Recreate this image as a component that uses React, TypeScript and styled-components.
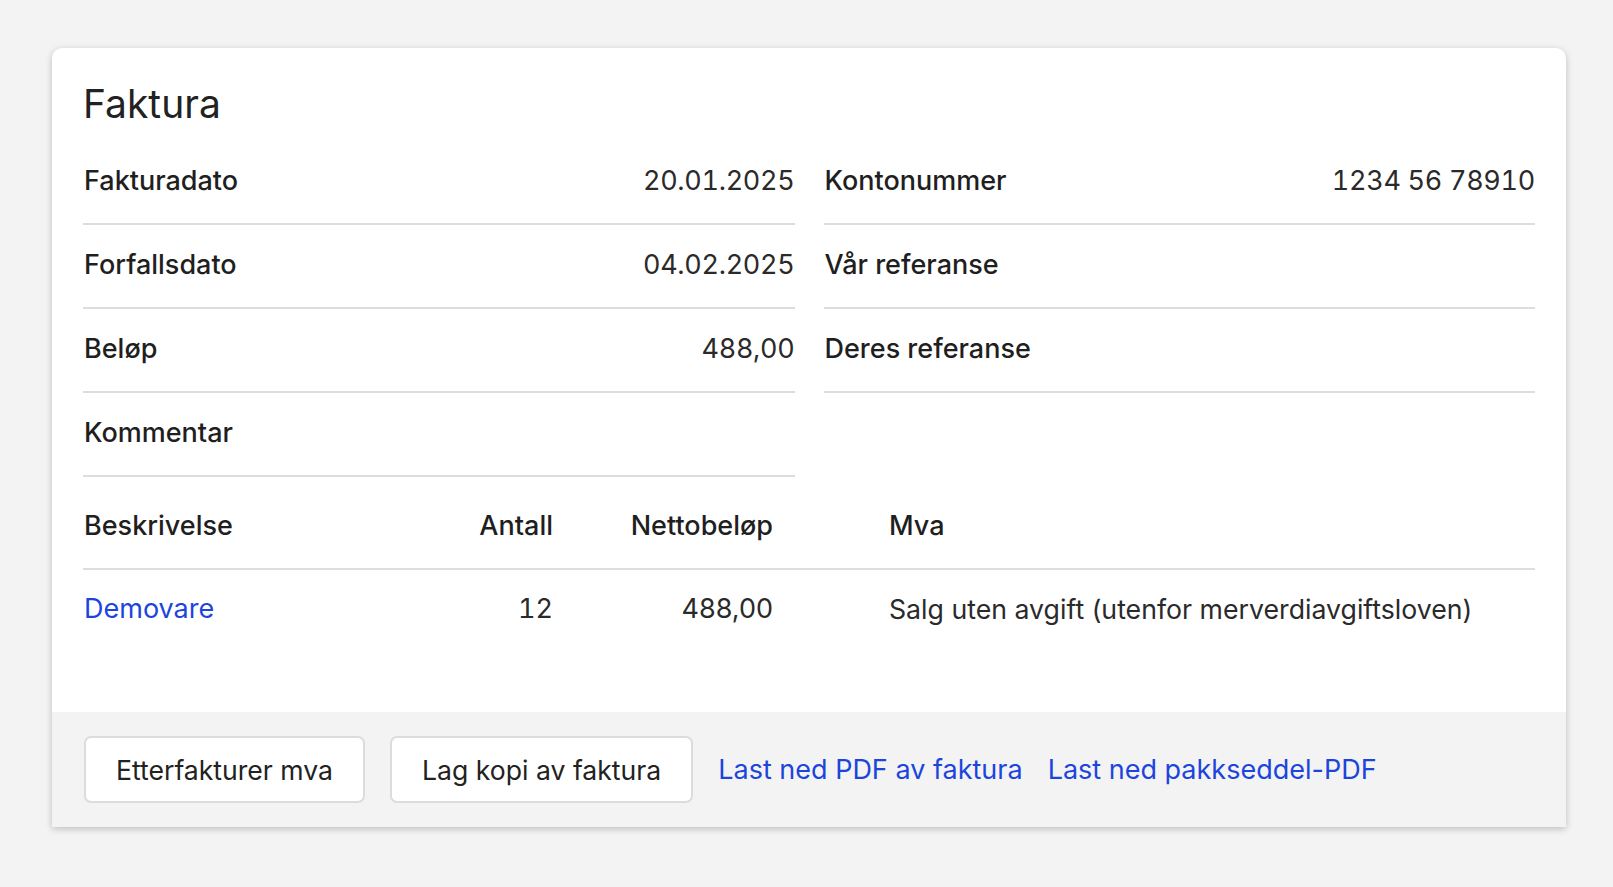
import React from "react";
import styled, { createGlobalStyle } from "styled-components";

const Global = createGlobalStyle`
  html, body { margin: 0; padding: 0; background: #f3f3f3; }
  body { font-family: Inter, "Liberation Sans", Arial, sans-serif; color: #222; }
  * { box-sizing: border-box; }
`;

const Page = styled.div`
  padding: 48px 47px 60px 52px;
`;

const Card = styled.section`
  width: 1514px;
  background: #fff;
  border-radius: 10px 10px 0 0;
  box-shadow: 0 2px 7px rgba(0, 0, 0, 0.22);
`;

const Body = styled.div`
  padding: 32px 31px 65px;
`;

const Title = styled.h1`
  margin: 0 0 13px;
  font-size: 39px;
  line-height: 48px;
  font-weight: 400;
  color: #222;
`;

const Columns = styled.div`
  display: grid;
  grid-template-columns: 1fr 1fr;
  column-gap: 29px;
  align-items: start;
`;

const List = styled.dl`
  margin: 0;
`;

const Row = styled.div`
  display: flex;
  justify-content: space-between;
  align-items: baseline;
  padding: 22px 0 24px 1px;
  border-bottom: 2px solid #dddddd;
  font-size: 27px;
  line-height: 36px;
`;

const Label = styled.dt`
  font-weight: 500;
  color: #1f1f1f;
`;

const Value = styled.dd`
  margin: 0;
  font-weight: 400;
  color: #2a2a2a;
  font-variant-numeric: tabular-nums;
  letter-spacing: -0.3px;
`;

const Table = styled.div`
  display: grid;
  grid-template-columns: 370px 100px 220px 1fr;
  font-size: 27px;
  line-height: 36px;
`;

const HeadCell = styled.div<{ $align?: "left" | "right"; $indent?: boolean }>`
  padding: 31px 0 24px ${(p) => (p.$indent ? "116px" : "1px")};
  text-align: ${(p) => p.$align ?? "left"};
  border-bottom: 2px solid #dddddd;
  font-weight: 500;
  color: #1f1f1f;
`;

const Cell = styled.div<{ $align?: "left" | "right"; $indent?: boolean; $num?: boolean }>`
  padding: 21px 0 20px ${(p) => (p.$indent ? "116px" : "1px")};
  text-align: ${(p) => p.$align ?? "left"};
  color: #2a2a2a;
  font-size: ${(p) => (p.$indent ? "26.7px" : "27px")};
  font-variant-numeric: ${(p) => (p.$num ? "tabular-nums" : "normal")};
`;

const Link = styled.a`
  color: #1c45dc;
  text-decoration: none;
  cursor: pointer;
`;

const Footer = styled.footer`
  display: flex;
  align-items: center;
  gap: 25px;
  padding: 24px 32px 24px 32px;
  background: #f3f3f3;
  font-size: 27px;
`;

const Button = styled.button`
  height: 67px;
  padding: 0 30px;
  background: #fff;
  border: 2px solid #dcdcdc;
  border-radius: 7px;
  font-family: inherit;
  font-size: 26.6px;
  color: #222;
  cursor: pointer;
`;

const FooterLink = styled(Link)`
  font-size: 27px;
`;

const leftRows: [string, string][] = [
  ["Fakturadato", "20.01.2025"],
  ["Forfallsdato", "04.02.2025"],
  ["Beløp", "488,00"],
  ["Kommentar", ""],
];

const rightRows: [string, string][] = [
  ["Kontonummer", "1234 56 78910"],
  ["Vår referanse", ""],
  ["Deres referanse", ""],
];

export default function App() {
  return (
    <>
      <Global />
      <Page>
        <Card>
          <Body>
            <Title>Faktura</Title>
            <Columns>
              <List>
                {leftRows.map(([l, v]) => (
                  <Row key={l}>
                    <Label>{l}</Label>
                    <Value>{v}</Value>
                  </Row>
                ))}
              </List>
              <List>
                {rightRows.map(([l, v]) => (
                  <Row key={l}>
                    <Label>{l}</Label>
                    <Value>{v}</Value>
                  </Row>
                ))}
              </List>
            </Columns>
            <Table>
              <HeadCell>Beskrivelse</HeadCell>
              <HeadCell $align="right">Antall</HeadCell>
              <HeadCell $align="right">Nettobeløp</HeadCell>
              <HeadCell $indent>Mva</HeadCell>
              <Cell>
                <Link>Demovare</Link>
              </Cell>
              <Cell $align="right" $num>12</Cell>
              <Cell $align="right">488,00</Cell>
              <Cell $indent>Salg uten avgift (utenfor merverdiavgiftsloven)</Cell>
            </Table>
          </Body>
          <Footer>
            <Button>Etterfakturer mva</Button>
            <Button>Lag kopi av faktura</Button>
            <FooterLink>Last ned PDF av faktura</FooterLink>
            <FooterLink>Last ned pakkseddel-PDF</FooterLink>
          </Footer>
        </Card>
      </Page>
    </>
  );
}
